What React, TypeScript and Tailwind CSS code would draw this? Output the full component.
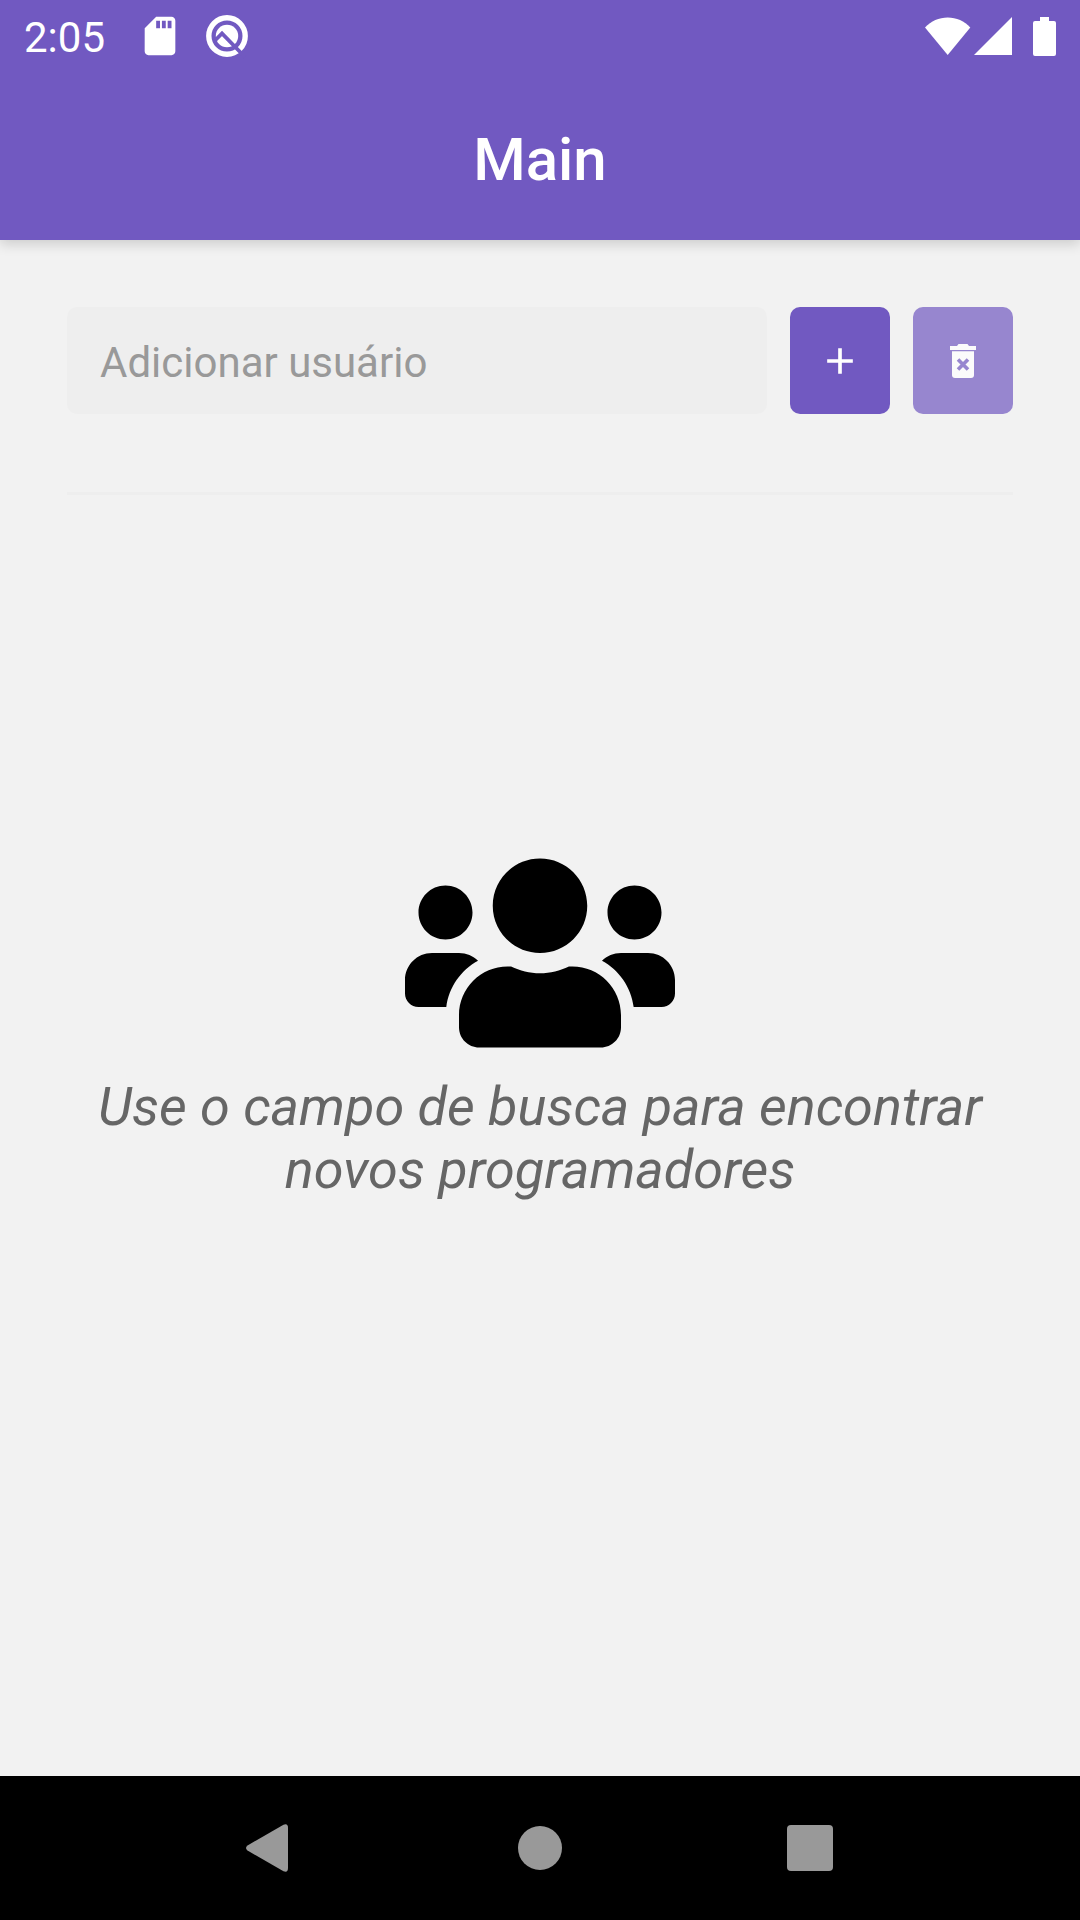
import { FaUsers } from "react-icons/fa";
import { MdAdd, MdSdCard } from "react-icons/md";

function StatusBar() {
  return (
    <div className="flex h-[72px] items-center justify-between px-6 text-white">
      <div className="flex items-center">
        <span className="pt-1 text-[42px] leading-none">2:05</span>
        <MdSdCard className="ml-8 size-[46px]" />
        <svg className="ml-5 size-[48px]" viewBox="0 0 48 48" aria-hidden="true">
          <circle cx="24" cy="24" r="18.2" fill="none" stroke="currentColor" strokeWidth="5.400" />
          <circle cx="24" cy="24" r="11.2" fill="currentColor" />
          <path d="M12 28.500L19 21.500L42 45" fill="none" stroke="#7159c1" strokeWidth="3.800" />
        </svg>
      </div>
      <div className="flex items-center">
        <svg className="h-[39px] w-[46px]" viewBox="0 0 46 39" fill="currentColor" aria-hidden="true">
          <path d="M0 10.500C6 4 14 .5 22.700 .5S39.500 4 45.300 10.500L22.700 38Z" />
        </svg>
        <svg className="ml-[3px] size-[38px]" viewBox="0 0 38 38" fill="currentColor" aria-hidden="true">
          <path d="M38 0V38H0Z" />
        </svg>
        <svg className="ml-5 h-[39px] w-6" viewBox="0 0 24 39" fill="currentColor" aria-hidden="true">
          <path d="M8 0h9v4h5a2 2 0 0 1 2 2v31a2 2 0 0 1-2 2H3a2 2 0 0 1-2-2V6a2 2 0 0 1 2-2h5Z" />
        </svg>
      </div>
    </div>
  );
}

function TrashIcon() {
  return (
    <svg className="h-[34px] w-[26px]" viewBox="0 0 26 34" fill="currentColor" aria-hidden="true">
      <path d="M0 2H7L8.500 0H17.500L19 2H26V6H0Z" />
      <path d="M2 7.300H24V31a3 3 0 0 1-3 3H5a3 3 0 0 1-3-3Z" />
      <path d="M8 15.500L18 25.500M18 15.500L8 25.500" fill="none" stroke="#7159c1" strokeWidth="3.600" />
    </svg>
  );
}

function NavigationBar() {
  return (
    <nav className="flex h-36 justify-center bg-black text-[#999]">
      <button type="button" aria-label="Voltar" className="flex w-1/4 items-center justify-center">
        <svg className="size-12" viewBox="0 0 48 48" fill="currentColor" aria-hidden="true">
          <path d="M1.500 21.500L37.500 .8Q42 -1 42 4V44Q42 49 37.500 47.200L1.500 26.500Q-1.500 24 1.500 21.500Z" />
        </svg>
      </button>
      <button type="button" aria-label="Início" className="flex w-1/4 items-center justify-center">
        <span className="size-11 rounded-full bg-[#999]" />
      </button>
      <button type="button" aria-label="Recentes" className="flex w-1/4 items-center justify-center">
        <span className="size-[46px] rounded bg-[#999]" />
      </button>
    </nav>
  );
}

export default function App() {
  return (
    <div className="flex min-h-screen flex-col bg-[#f2f2f2] font-['Roboto',sans-serif]">
      <header className="relative bg-[#7159c1] shadow-[0_4px_12px_rgba(0,0,0,0.16)]">
        <StatusBar />
        <div className="flex h-[168px] items-center justify-center pt-2">
          <h1 className="text-[60px] leading-none font-medium text-white">Main</h1>
        </div>
      </header>
      <main className="flex flex-1 flex-col px-[67px] pt-[67px]">
        <form className="flex gap-[23px] border-b-3 border-[#eee] pb-[78px]" onSubmit={(e) => e.preventDefault()}>
          <input
            type="text"
            aria-label="Adicionar usuário"
            placeholder="Adicionar usuário"
            className="h-[107px] min-w-0 flex-1 rounded-[10px] bg-[#eee] px-[33px] pt-1 text-[42px] text-[#333] outline-none placeholder:text-[#999]"
          />
          <button
            type="submit"
            aria-label="Adicionar"
            className="flex w-[100px] items-center justify-center rounded-[10px] bg-[#7159c1] text-white"
          >
            <MdAdd className="size-11" />
          </button>
          <button
            type="button"
            aria-label="Excluir todos"
            className="flex w-[100px] items-center justify-center rounded-[10px] bg-[#7159c1] text-white opacity-70"
          >
            <TrashIcon />
          </button>
        </form>
        <section className="flex flex-1 flex-col items-center pt-[350px]">
          <FaUsers className="h-[216px] w-[270px] text-black" />
          <p className="mt-[14px] text-center text-[54px] leading-[63px] text-[#666] italic">
            Use o campo de busca para encontrar novos programadores
          </p>
        </section>
      </main>
      <NavigationBar />
    </div>
  );
}
